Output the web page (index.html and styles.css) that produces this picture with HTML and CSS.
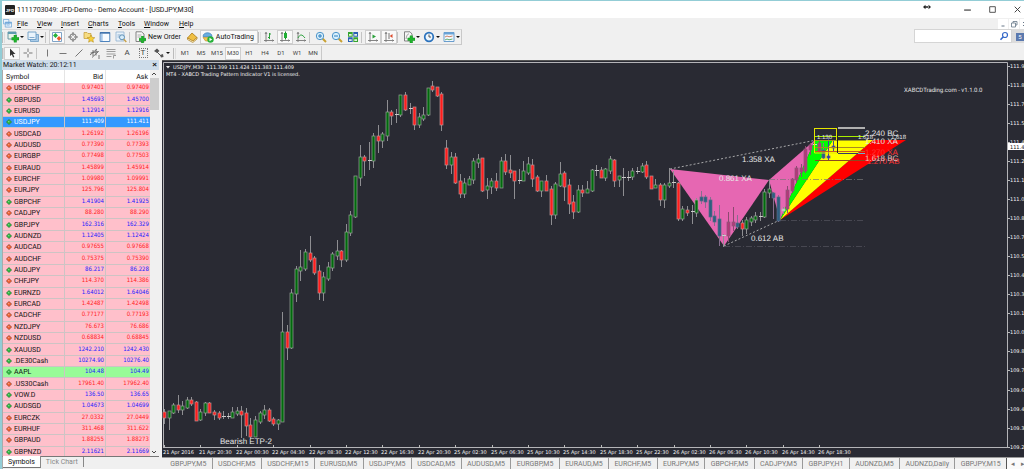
FILE: index.html
```html
<!DOCTYPE html>
<html lang="en">
<head>
<meta charset="utf-8">
<title>1111703049: JFD-Demo - Demo Account - [USDJPY,M30]</title>
<link rel="stylesheet" href="styles.css">
</head>
<body>
<svg class="defs" aria-hidden="true">
  <symbol id="diamond" viewBox="0 0 6 6"><path d="M3 0.3 5.8 3 3 5.7 0.2 3Z" stroke="#555" stroke-opacity=".7" stroke-width=".6"/><path d="M2 2h1.4v1.2H2z" fill="#fff" opacity=".4"/></symbol>
  <symbol id="axes" viewBox="0 0 10 10"><path d="M2 0v10M0 8.5h10M1 2l1-1.500 1 1.500M8.500 7.500l1 1-1 1" fill="none" stroke="#777" stroke-width=".9"/></symbol>
  <symbol id="plus" viewBox="0 0 6 6"><path d="M2 0h2v2h2v2H4v2H2V4H0V2h2z" fill="#1fb52c" stroke="#0d8a1a" stroke-width=".4"/></symbol>
</svg>
<div class="app">
  <header class="titlebar">
    <svg class="logo" viewBox="0 0 9 9"><rect width="9" height="9" rx="1" fill="#222"/><text x="4.500" y="6.200" text-anchor="middle" class="logo-text">JFD</text></svg>
    <h1 class="title">1111703049: JFD-Demo - Demo Account - [USDJPY,M30]</h1>
    <svg class="pin" viewBox="0 0 8 6"><path d="M0 3 2.500.8v4.400zM8 3 5.500.8v4.400zM2 2.200h4v1.600H2z" fill="#222"/></svg>
    <div class="window-buttons">
      <button aria-label="Minimize"><svg viewBox="0 0 8 8"><path d="M1 4.500h6" stroke="#333" fill="none"/></svg></button>
      <button aria-label="Maximize"><svg viewBox="0 0 8 8"><path d="M1.500 1.500h5v5h-5z" stroke="#444" fill="none" stroke-width=".8"/></svg></button>
      <button aria-label="Close"><svg viewBox="0 0 8 8"><path d="M1.500 1.500l5 5M6.500 1.500l-5 5" stroke="#333" fill="none" stroke-width=".8"/></svg></button>
    </div>
  </header>

  <nav class="menubar">
    <svg class="menu-icon" viewBox="0 0 10 10"><path d="M.5.5h6v5h-6zM2.500 3.500h7v5.500h-7z" fill="#e9f3fc" stroke="#6aa3d6" stroke-width=".8"/><path d="M2.500 3.500h7v1.500h-7z" fill="#6aa3d6"/><path d="M4 7.500l1.500-1 1 .5L8 6" stroke="#6aa3d6" fill="none" stroke-width=".7"/></svg>
    <button class="m-file"><u>F</u>ile</button>
    <button class="m-view"><u>V</u>iew</button>
    <button class="m-insert"><u>I</u>nsert</button>
    <button class="m-charts"><u>C</u>harts</button>
    <button class="m-tools"><u>T</u>ools</button>
    <button class="m-window"><u>W</u>indow</button>
    <button class="m-help"><u>H</u>elp</button>
    <div class="mdi-buttons">
      <button aria-label="Minimize chart"><svg viewBox="0 0 8 8"><path d="M2.500 6h3" stroke="#678" fill="none"/></svg></button>
      <button aria-label="Restore chart"><svg viewBox="0 0 8 8"><path d="M3 3V1.500h4V5H5.500M1.500 3h4v4h-4z" stroke="#678" fill="none" stroke-width=".8"/></svg></button>
      <button aria-label="Close chart"><svg viewBox="0 0 8 8"><path d="M2 2l4 4M6 2L2 6" stroke="#678" fill="none"/></svg></button>
    </div>
  </nav>

  <div class="bar-row">
    <div class="toolbar" role="toolbar" aria-label="Standard">
      <i class="grip"></i>
      <button class="tool drop" aria-label="New chart"><svg viewBox="0 0 12 12"><path d="M1 1h8v7H1z" fill="#eaf4ea" stroke="#5b8f9c" stroke-width=".9"/><path d="M1 1h8v2H1z" fill="#5e9bb0"/><use href="#plus" x="4.500" y="4" width="7.500" height="7.500"/></svg></button>
      <button class="tool drop" aria-label="Profiles"><svg viewBox="0 0 12 12"><path d="M3.500 3.500h8v7h-8z" fill="#a9cbe8" stroke="#6b9cc4" stroke-width=".8"/><path d="M1 1h8v7.500H1z" fill="#eaf4fc" stroke="#6b9cc4" stroke-width=".9"/><path d="M2.500 6.500h5" stroke="#85add0"/></svg></button>
      <i class="sep"></i>
      <button class="tool on" aria-label="Market Watch"><svg viewBox="0 0 12 12"><path d="M1.500 1.500h9v9h-9z" fill="#fff" stroke="#7fa3c7"/><path d="M4.500 2 7 4.500 4.500 7 2 4.500z" fill="#28b33c"/><path d="M8 5l2.300 2.500L8 10 5.700 7.500z" fill="#ee5a2c"/></svg></button>
      <button class="tool" aria-label="Data Window"><svg viewBox="0 0 12 12"><circle cx="6" cy="6" r="3.200" fill="none" stroke="#777"/><path d="M6 1v4M6 7v4M1 6h4M7 6h4" stroke="#777"/></svg></button>
      <button class="tool" aria-label="Navigator"><svg viewBox="0 0 12 12"><path d="M1 1.500h3l1 1h3v5H1z" fill="#f6dc82" stroke="#c29a35" stroke-width=".7"/><path d="M8 4l1.200 2.400 2.600.3-2 1.800.6 2.700L8 9.800l-2.400 1.400.6-2.700-2-1.800 2.600-.3z" fill="#f7d038" stroke="#b98f1c" stroke-width=".6"/></svg></button>
      <button class="tool" aria-label="Terminal"><svg viewBox="0 0 12 12"><path d="M1.200 1.500h9.600v9H1.200z" fill="#f7fbff" stroke="#4d83bd"/><path d="M1 1.300h10v1.400H1z" fill="#3a6ea8"/><path d="M1.700 3h2v7h-2z" fill="#a7c8ea"/></svg></button>
      <button class="tool" aria-label="Strategy Tester"><svg viewBox="0 0 12 12"><path d="M1 1h8v9H1z" fill="#e8f1f9" stroke="#8fb1d0" stroke-width=".8"/><path d="M2.500 4h3M2.500 6h2" stroke="#8fb1d0"/><circle cx="7" cy="6.300" r="2.500" fill="#d5ecfb" stroke="#5f8fb5"/><path d="M8.800 8.200l2.500 2.800" stroke="#c7a14a" stroke-width="1.500"/></svg></button>
      <i class="sep"></i>
      <button class="tool wide"><svg viewBox="0 0 12 12"><path d="M2 .8h5.500L10 3v7.500H2z" fill="#f7f7f7" stroke="#777" stroke-width=".9"/><path d="M3.500 4h4M3.500 6h3" stroke="#999" stroke-width=".8"/><use href="#plus" x="5" y="5" width="7" height="7"/></svg>New Order</button>
      <button class="tool" aria-label="MetaEditor"><svg viewBox="0 0 12 12"><path d="M1.500 7 6 2l5 4.500L7 10.500z" fill="#f0c044" stroke="#a97a16" stroke-width=".8"/><path d="M1.500 7v1.500L6.800 11.500l4.200-3.500V6.500L7 10z" fill="#fff4cf" stroke="#a97a16" stroke-width=".7"/></svg></button>
      <button class="tool wide on"><svg viewBox="0 0 12 12"><path d="M1 6.500h9L8.500 10h-5z" fill="#f0c751" stroke="#b08a27" stroke-width=".6"/><path d="M1 5.500C1 .5 10 .5 10 5.500Z" fill="#68aee0" stroke="#3c7fb8" stroke-width=".7"/><circle cx="8.500" cy="8.500" r="3.200" fill="#27b13a"/><path d="M7.500 6.800v3.400l2.800-1.700z" fill="#fff"/></svg>AutoTrading</button>
      <i class="grip"></i>
      <button class="tool" aria-label="Bar chart"><svg viewBox="0 0 12 12"><use href="#axes" x="1" y="1" width="10" height="10"/><path d="M6.500 2v6M5 6.500h1.500M6.500 3H8" stroke="#2ba13b" fill="none"/></svg></button>
      <button class="tool on" aria-label="Candlesticks"><svg viewBox="0 0 12 12"><use href="#axes" x="1" y="1" width="10" height="10"/><path d="M6.500.5v8" stroke="#168a28"/><path d="M5 2h3v5H5z" fill="#1fae33"/></svg></button>
      <button class="tool" aria-label="Line chart"><svg viewBox="0 0 12 12"><use href="#axes" x="1" y="1" width="10" height="10"/><path d="M3 7c2-4 4-4 7 0" stroke="#2ba13b" fill="none"/></svg></button>
      <i class="sep"></i>
      <button class="tool" aria-label="Zoom in"><svg viewBox="0 0 12 12"><path d="M7.500 7.500l3.500 3.500" stroke="#c9a132" stroke-width="2"/><circle cx="5" cy="5" r="3.700" fill="#d8effc" stroke="#4b93c9"/><path d="M3 5h4M5 3v4" stroke="#2d7fbe"/></svg></button>
      <button class="tool" aria-label="Zoom out"><svg viewBox="0 0 12 12"><path d="M7.500 7.500l3.500 3.500" stroke="#c9a132" stroke-width="2"/><circle cx="5" cy="5" r="3.700" fill="#d8effc" stroke="#4b93c9"/><path d="M3 5h4" stroke="#2d7fbe"/></svg></button>
      <button class="tool" aria-label="Tile windows"><svg viewBox="0 0 12 12"><path d="M1 1h4.700v4.700H1zM6.300 6.300H11V11H6.300z" fill="#35a52f"/><path d="M6.300 1H11v4.700H6.300zM1 6.300h4.700V11H1z" fill="#2a5fb4"/><path d="M2 3h2.700v1.700H2zM7.300 3H10v1.700H7.300zM2 8.300h2.700V10H2zM7.300 8.300H10V10H7.300z" fill="#e6f3e0"/></svg></button>
      <i class="sep"></i>
      <button class="tool on" aria-label="Auto scroll"><svg viewBox="0 0 12 12"><use href="#axes" x="1" y="1" width="10" height="10"/><path d="M5.500 3.500v4L9 5.500z" fill="#2ba13b"/></svg></button>
      <button class="tool on" aria-label="Chart shift"><svg viewBox="0 0 12 12"><use href="#axes" x="1" y="1" width="10" height="10"/><path d="M6 2v6" stroke="#777"/><path d="M9.500 3v4L6.700 5z" fill="#dd4a2c"/></svg></button>
      <i class="sep"></i>
      <button class="tool drop" aria-label="Indicators"><svg viewBox="0 0 12 12"><path d="M1.500.8h5.500L9 3v7H1.500z" fill="#f7f7f7" stroke="#777" stroke-width=".9"/><path d="M3 8c1-5 2-5 3-5" stroke="#888" fill="none" stroke-width=".8"/><use href="#plus" x="4.500" y="4.500" width="7.500" height="7.500"/></svg></button>
      <button class="tool drop" aria-label="Periods"><svg viewBox="0 0 12 12"><circle cx="6" cy="6" r="4.300" fill="#edf6fd" stroke="#2a72bd" stroke-width="1.700"/><path d="M6 3.500V6h2" stroke="#444" fill="none" stroke-width=".9"/></svg></button>
      <button class="tool drop" aria-label="Templates"><svg viewBox="0 0 12 12"><path d="M1 1.500h10v9H1z" fill="#f3f9ff" stroke="#5a93c8" stroke-width=".9"/><path d="M1 1.500h10v2H1z" fill="#69a3d6"/><path d="M2 6l2-1 2 .8L9.500 5" stroke="#c0603b" fill="none" stroke-width=".8"/><path d="M2 9l2-1 2 .8L9.500 8" stroke="#3b9b48" fill="none" stroke-width=".8"/></svg></button>
    </div>
    <label class="search"><input type="search" aria-label="Search"><svg viewBox="0 0 10 10"><circle cx="6" cy="4" r="2.500" fill="#fff" stroke="#3568c8" stroke-width="1.200"/><path d="M4.300 5.800 1.500 8.700" stroke="#3568c8" stroke-width="1.600"/></svg></label>
    <button class="chat" aria-label="5 messages"><span>5</span></button>
  </div>

  <div class="bar-row second">
    <div class="toolbar periods" role="toolbar" aria-label="Line studies and periods">
      <i class="grip"></i>
      <button class="tool on" aria-label="Cursor"><svg viewBox="0 0 12 12"><path d="M4 1.500v7.500l1.800-1.600 1.300 3 1.200-.5L7 7h2.500z" fill="#333"/></svg></button>
      <button class="tool" aria-label="Crosshair"><svg viewBox="0 0 12 12"><path d="M6 1.500v3.500M6 7v3.500M1.500 6H5M7 6h3.500" stroke="#777"/></svg></button>
      <i class="sep thin"></i>
      <button class="tool" aria-label="Vertical line"><svg viewBox="0 0 12 12"><path d="M6.500 2.500v7" stroke="#777"/></svg></button>
      <button class="tool" aria-label="Horizontal line"><svg viewBox="0 0 12 12"><path d="M2.500 6.500h7" stroke="#777"/></svg></button>
      <button class="tool" aria-label="Trendline"><svg viewBox="0 0 12 12"><path d="M2.500 9.500l7-7" stroke="#777"/></svg></button>
      <button class="tool" aria-label="Channel"><svg viewBox="0 0 12 12"><path d="M1 8l7-6M3 10.500l6.500-6M1.500 6l8-1.500M4 3v6M7 2.500v6M9 9h2M9 11h2" stroke="#666" stroke-width=".9"/></svg></button>
      <button class="tool" aria-label="Fibonacci"><svg viewBox="0 0 12 12"><path d="M1.500 2.500h9M1.500 4.500h9M1.500 7h9M1.500 9.500h5M8.500 8.500h2.500M8.500 8.500v3" stroke="#888" stroke-width=".8"/></svg></button>
      <button class="tool glyph">A</button>
      <button class="tool glyph"><span class="boxed">T</span></button>
      <button class="tool drop" aria-label="Arrows"><svg viewBox="0 0 12 12"><path d="M1 4l3-2.500L6.500 4 4 6zM7 8l3-1 .5 3L8 10.500z" fill="#555"/><path d="M4 5l4 4" stroke="#555"/></svg></button>
      <i class="grip far"></i>
      <button class="tool">M1</button><button class="tool">M5</button><button class="tool">M15</button><button class="tool on">M30</button><button class="tool">H1</button><button class="tool">H4</button><button class="tool">D1</button><button class="tool">W1</button><button class="tool">MN</button>
    </div>
  </div>

  <main class="workspace">
    <section class="watch">
      <header class="watch-title"><h2>Market Watch: 20:12:11</h2><button aria-label="Close Market Watch">×</button></header>
      <div class="watch-list">
        <table>
          <thead><tr><th>Symbol</th><th>Bid</th><th>Ask</th></tr></thead>
          <tbody id="quotes"></tbody>
        </table>
        <div class="scroll"><svg viewBox="0 0 8 6"><path d="M2 4l2-2 2 2" stroke="#444" fill="none"/></svg><i></i><svg viewBox="0 0 8 6"><path d="M2 2l2 2 2-2" stroke="#444" fill="none"/></svg></div>
      </div>
      <footer class="watch-tabs"><button class="current">Symbols</button><button>Tick Chart</button></footer>
    </section>

    <section class="charts">
      <div class="chart"><svg id="chart" viewBox="162 60 862 397" preserveAspectRatio="xMinYMin slice" role="img" aria-label="USDJPY M30 candlestick chart"></svg></div>
      <nav class="chart-tabs">
        <div class="tab-strip">
          <button>GBPJPY,M5</button><button>USDCHF,M5</button><button>USDCHF,M15</button><button>EURUSD,M5</button><button>USDJPY,M5</button><button>USDCAD,M5</button><button>AUDUSD,M5</button><button>EURGBP,M5</button><button>EURAUD,M5</button><button>EURCHF,M5</button><button>EURJPY,M5</button><button>GBPCHF,M5</button><button>CADJPY,M5</button><button>GBPJPY,H1</button><button>AUDNZD,M5</button><button>AUDNZD,Daily</button><button>GBPJPY,M15</button>
        </div>
        <div class="tab-scroll"><button aria-label="Scroll left">◂</button><button aria-label="Scroll right">▸</button></div>
      </nav>
    </section>
  </main>
</div>
<script src="app.js"></script>
</body>
</html>
```

FILE: styles.css
```css
* { box-sizing: border-box; }
body { margin: 0; font-family: Roboto, "Open Sans", sans-serif; font-size: 7px; line-height: 10px; color: #111; text-rendering: geometricPrecision; }
button { font: inherit; color: inherit; background: none; border: 0; padding: 0; margin: 0; }
h1, h2 { margin: 0; font: inherit; }
svg { display: block; }
.defs { position: absolute; width: 0; height: 0; }

.app { display: flex; flex-direction: column; height: 100vh; overflow: hidden; background: #f0f0f0; border-top: 1px solid #93cdd6; border-left: 2px solid #93cdd6; }

.titlebar { display: flex; align-items: center; flex: none; height: 17px; padding-left: 3px; background: #fff; }
.logo { width: 10px; height: 10px; margin-right: 2px; }
.logo-text { font: bold 4px "Liberation Sans", sans-serif; fill: #fff; }
.title { flex: 1; white-space: nowrap; }
.pin { width: 8px; height: 6px; margin: 0 32px 5px 0; }
.window-buttons { display: flex; gap: 16px; padding-right: 2px; }
.window-buttons svg { width: 9px; height: 9px; }

.menubar { display: flex; align-items: center; flex: none; height: 11px; padding-left: 1px; }
.menubar u { text-underline-offset: 1px; text-decoration-thickness: 1px; }
.menu-icon { width: 9px; height: 9px; margin-right: 5px; }
.menubar > button { text-align: left; }
.m-file { width: 20px; }
.m-view { width: 24px; }
.m-insert { width: 27px; }
.m-charts { width: 30px; }
.m-tools { width: 26px; }
.m-window { width: 35px; }
.mdi-buttons { display: flex; gap: 1px; margin: 0 -6px 0 auto; }
.mdi-buttons button { width: 10px; height: 10px; padding: 1px; background: #fff; }

.bar-row { display: flex; align-items: flex-start; flex: none; height: 17px; }
.bar-row.second { height: 14px; }
.toolbar { display: flex; align-items: center; height: 16px; border: 1px solid #c9c9c9; border-left: 0; border-top-color: #d8d8d8; }
.periods { height: 14px; border-top: 0; border-bottom: 0; font-size: 6px; color: #444; }
.grip { width: 3px; height: 11px; border-left: 1px solid #bbb; border-right: 1px solid #ddd; flex: none; }
.grip.far { margin: 0 1px 0 2px; }
.periods > .grip:first-child { width: 2px; }
.sep { width: 4px; height: 11px; border-left: 1px solid #c4c4c4; flex: none; }
.sep.thin { width: 3px; }
.tool { display: flex; align-items: center; justify-content: center; width: 16px; height: 14px; flex: none; }
.tool svg { width: 12px; height: 12px; flex: none; }
.periods .tool { height: 13px; }
.tool.on { background: #f9f9f9; border: 1px solid #cfcfcf; }
.tool.drop { width: 20px; justify-content: flex-start; padding-left: 2px; gap: 1px; }
.tool.drop::after { content: ""; border: 2px solid transparent; border-top-color: #111; border-bottom: 0; }
.tool.wide { width: auto; padding: 0 3px 0 1px; gap: 2px; color: #111; }
.tool.glyph { font-size: 8px; }
.boxed { border: 1px dotted #777; width: 9px; line-height: 8px; }

.search { display: flex; align-items: center; width: 98px; height: 14px; margin-left: auto; background: #fff; border: 1px solid #d5d5d5; }
.search input { flex: 1; min-width: 0; border: 0; padding: 0; background: none; }
.search svg { width: 10px; height: 10px; margin-right: 2px; }
.chat { width: 12px; height: 14px; background: #dcdcdc; padding: 2px 0 0 4px; }
.chat span { display: block; background: #5b79ae; color: #fff; font-size: 6px; line-height: 8px; }

.workspace { display: flex; flex: 1; min-height: 0; }
.watch { display: flex; flex-direction: column; width: 157px; flex: none; margin-right: 3px; }
.watch-title { display: flex; align-items: center; justify-content: space-between; flex: none; height: 10px; padding: 0 2px 0 1px; background: #cddcea; }
.watch-title button { font: bold 8px/8px "Liberation Sans", sans-serif; }
.watch-list { display: flex; flex: 1; min-height: 0; overflow: hidden; border-left: 1px solid #aaa; }
.watch table { display: flex; flex-direction: column; flex: 1; height: calc(100% + 2px); }
.watch thead { flex: none; height: 13px; background: #fff; }
.watch tbody { flex: 1; min-height: 0; display: grid; grid-auto-rows: 1fr; }
.watch tr { display: grid; grid-template-columns: 62px 41px 1fr; min-height: 0; }
.watch th { font-weight: normal; text-align: right; padding: 2px 2px 1px; border-right: 1px solid #e5e5e5; }
.watch th:first-child { text-align: left; padding-left: 3px; }
.watch td { display: flex; align-items: center; justify-content: flex-end; min-height: 0; padding: 0 1px; background: #ffc0cb; border-right: 1px solid #cdc4c4; border-bottom: 1px solid #cdc4c4; color: #f22; font-family: "DejaVu Sans Condensed", "Open Sans", sans-serif; font-size: 6px; }
.watch .up td { color: #22f; }
.watch tr td:first-child { justify-content: flex-start; gap: 2px; padding-left: 3px; color: #111; font-family: inherit; font-size: 7px; }
.watch td:last-child, .watch th:last-child { border-right: 0; }
.watch td svg { width: 6px; height: 6px; fill: #f0592a; }
.watch .up svg { fill: #27b53a; }
.watch .selected td, .watch .selected td:first-child { background: #3399ff; color: #fff; }
.watch .fresh td { background: #98fb98; }
.scroll { display: flex; flex-direction: column; width: 9px; flex: none; background: #f0f0f0; }
.scroll svg { width: 8px; height: 8px; }
.scroll i { height: 32px; margin-bottom: auto; background: #cdcdcd; }
.watch-tabs { display: flex; flex: none; height: 13px; border-top: 1px solid #777; border-left: 1px solid #aaa; }
.watch-tabs button { height: 10px; padding: 0 5px; color: #888; border-right: 1px solid #888; }
.watch-tabs .current { margin-top: -1px; height: 12px; background: #fff; color: #111; border-bottom: 1px solid #777; }

.charts { display: flex; flex-direction: column; flex: 1; min-width: 0; }
.chart { flex: 1; min-height: 0; overflow: hidden; background: #292a33; border-bottom: 1px solid #9a9a9a; }
.chart svg { width: 100%; height: 100%; }
.chart-tabs { display: flex; flex: none; height: 11px; background: #f0f0f0; color: #777; }
.tab-strip { display: flex; flex: 1; min-width: 0; padding-left: 3px; border-right: 1px solid #555; }
.tab-strip button { flex: 1 1 auto; border-right: 1px solid #999; white-space: nowrap; }
.tab-strip button:last-child { border-right: 0; }
.tab-scroll { display: flex; gap: 6px; width: 17px; padding-left: 4px; background: #fafafa; overflow: hidden; flex: none; }

.axis-text { font-family: "DejaVu Sans", "Open Sans", sans-serif; font-size: 5px; fill: #f4f4f4; }
.axis-text.current { fill: #111; }
.note { font-family: "Liberation Sans", sans-serif; font-size: 8px; fill: #e6e6e6; }
.note.tiny { font-size: 6px; }
.note.alert { fill: #f33; }
.note.soft { fill: #eec0c0; }
.note.brand { font-family: Roboto, sans-serif; font-size: 6px; }
.frame { fill: none; stroke: #b4b4b8; }
.frame.outer { stroke: #555; }
```

FILE: app.js
```javascript
const quotes = `USDCHF 0.97401 0.97409 d
GBPUSD 1.45693 1.45700 u
EURUSD 1.12914 1.12916 u
USDJPY 111.409 111.411 u selected
USDCAD 1.26192 1.26196 d
AUDUSD 0.77390 0.77393 d
EURGBP 0.77498 0.77503 d
EURAUD 1.45899 1.45914 d
EURCHF 1.09980 1.09991 d
EURJPY 125.796 125.804 d
GBPCHF 1.41904 1.41925 u
CADJPY 88.280 88.290 d
GBPJPY 162.316 162.329 u
AUDNZD 1.12405 1.12424 u
AUDCAD 0.97655 0.97668 d
AUDCHF 0.75375 0.75390 d
AUDJPY 86.217 86.228 u
CHFJPY 114.370 114.386 d
EURNZD 1.64012 1.64046 u
EURCAD 1.42487 1.42498 d
CADCHF 0.77177 0.77193 d
NZDJPY 76.673 76.686 d
NZDUSD 0.68834 0.68845 d
XAUUSD 1242.210 1242.430 u
.DE30Cash 10274.90 10276.40 u
AAPL 104.48 104.49 u fresh
.US30Cash 17961.40 17962.40 d
VOW.D 136.50 136.65 u
AUDSGD 1.04673 1.04699 u
EURCZK 27.0332 27.0449 d
EURHUF 311.468 311.622 d
GBPAUD 1.88255 1.88273 d
GBPNZD 2.11621 2.11669 u`.split("\n").map(line => line.split(" "));

document.getElementById("quotes").innerHTML = quotes.map(([name, bid, ask, dir, state = ""]) =>
  `<tr class="${dir === "u" ? "up" : "down"} ${state}"><td><svg><use href="#diamond"/></svg>${name}</td><td>${bid}</td><td>${ask}</td></tr>`).join("");

// Each candle: colour, high, body top, body bottom, low.
// g rising, r falling, w flat; m and t are rising and falling inside a filled pattern, b is blue.
const candles = `r409,412,417,423 g411,411,417,429 g403,405,412,413 r395,405,409,412 g401,406,409,414 g397,400,407,408 r397,400,403,405 r401,402,420,420 g409,412,419,420 g402,403,412,415 r402,403,412,412 r410,412,414,419 r411,413,417,419 w411,416,416,418 w413,416,416,418 g407,412,417,417 g407,411,413,415 r406,411,414,437 r408,413,425,435 r418,425,436,438 g416,420,436,436 g411,413,421,423 g405,410,414,418 r408,410,420,421 r417,419,423,425 g419,420,423,429 g312,332,421,421 r325,332,347,359 g289,293,347,348 g266,269,293,301
g250,267,270,280 g249,252,268,270 r236,253,259,261 r256,258,272,274 r265,271,292,299 g272,277,292,300 g262,267,278,280 g252,254,267,270 g240,251,255,259 r250,251,259,266 g224,232,259,261 g211,215,232,235 g176,176,216,217 g145,157,177,185 r155,157,160,175 w142,160,160,169 g133,136,160,167 r125,136,140,152 g132,134,140,147 g100,112,135,140 r110,112,115,124 w109,114,114,122 g95,95,114,116 r92,95,109,110 w103,108,108,113 r107,107,124,129 g113,117,124,127 g107,115,118,120 g88,88,114,115 r81,86,89,91
r87,87,95,96 r92,94,124,130 r140,148,164,168 g152,157,164,173 r153,157,182,183 r174,181,193,197 g178,183,193,197 g176,179,184,184 g158,161,179,183 g154,159,162,167 r158,158,190,191 g178,186,189,198 g178,181,186,193 r173,181,187,190 g157,161,187,187 r154,161,171,174 r155,170,172,177 r171,171,180,198 w169,180,180,183 g161,171,180,180 g157,164,172,174 r159,165,178,186 r175,177,190,191 g181,181,190,196 r175,181,190,190 r186,189,214,224 g182,184,214,218 g162,174,185,186 r171,173,186,200 r179,185,203,213
r195,202,211,218 g185,190,211,212 r185,190,192,196 g181,189,192,192 g169,170,190,191 w165,170,170,175 r167,170,177,177 g168,169,177,180 g156,159,170,173 r159,160,180,186 g176,176,179,186 w168,177,177,195 w171,177,177,180 g168,171,176,179 w167,171,171,173 g163,166,171,172 r161,165,176,178 r176,176,188,188 g179,185,187,187 r183,185,199,205 g183,185,199,207 g168,183,185,187 w171,182,182,187 r182,183,218,220 g206,209,218,220 r206,210,212,215 w205,211,211,223 g198,200,212,216 t191,197,200,203 t195,197,201,207
t197,200,216,220 t211,216,221,225 t205,219,235,245 w234,235,235,246 m212,222,235,241 m207,222,225,230 t215,223,226,228 r220,223,228,235 g217,220,228,233 g216,218,221,225 g212,216,219,222 w212,216,216,220 g189,192,216,217 g180,189,192,197 t192,193,197,218 t195,197,220,221 w207,209,210,213 m186,190,208,212 m178,179,190,192 m166,168,179,182 m164,168,171,176 m146,149,170,172 m143,145,149,154 w139,144,144,152 m140,143,150,152 t143,150,157,158 b138,156,157,160 b141,146,147,150`
  .split(/\s+/).map(s => [s[0], ...s.slice(1).split(",").map(Number)]);

const fills = { g: "#006a0c", r: "#ff1c1c", w: "#ccc", m: "#b3387a", t: "#2d5f80", b: "#34348c" };
const edges = { g: "#98a298", r: "#b99696", w: "#bbb", m: "#8c5a78", t: "#5a6a86", b: "#555bb0" };
const wicks = { g: "#8e8e92", r: "#8e8e92", w: "#8e8e92", m: "#8b4a70", t: "#876f90", b: "#44449c" };

function candle([kind, high, top, bottom, low], i) {
  const x = Math.round(164 + i * 4.548);
  const wick = `<path d="M${x + 0.5} ${high}V${low + 1}" stroke="${wicks[kind]}"/>`;
  if (top === bottom) return wick + `<path d="M${x - 1} ${top + 0.5}h4" stroke="${fills[kind]}"/>`;
  return wick + `<rect x="${x - 1}" y="${top}" width="3" height="${bottom - top + 1}" fill="${fills[kind]}" stroke="${edges[kind]}" stroke-width=".7"/>`;
}
const text = (x, y, value, cls = "note") => `<text x="${x}" y="${y}" class="${cls}">${value}</text>`;
const poly = (points, fill) => `<polygon points="${points}" fill="${fill}"/>`;
const line = (d, stroke, extra = "") => `<path d="${d}" stroke="${stroke}" fill="none" ${extra}/>`;

const prices = ["111.9", "111.8", "111.7", "111.5", "111.4", "111.2", "111.1", "111.0", "110.8", "110.7", "110.5", "110.4", "110.3", "110.1", "110.0", "109.8", "109.7", "109.6", "109.4", "109.3", "109.2"];
const times = ["21 Apr 2016", "21 Apr 20:30", "22 Apr 00:30", "22 Apr 04:30", "22 Apr 08:30", "22 Apr 12:30", "22 Apr 16:30", "22 Apr 20:30", "25 Apr 02:30", "25 Apr 06:30", "25 Apr 10:30", "25 Apr 14:30", "25 Apr 18:30", "25 Apr 22:30", "26 Apr 02:30", "26 Apr 06:30", "26 Apr 10:30", "26 Apr 14:30", "26 Apr 18:30"];

const dashed = 'stroke-dasharray="2 2" stroke-width=".8"';
const dashDot = 'stroke-dasharray="6 2 1 2" stroke-width=".7"';

document.getElementById("chart").innerHTML = [
  `<rect x="162" y="60" width="862" height="397" fill="#292a33"/>`,
  `<path d="M162 60.500H1024" class="frame outer"/>`,
  `<path d="M163.500 448V62.500H1007.500V448" class="frame"/><path d="M163 447.500h845" class="frame"/>`,
  ...prices.map((p, i) => line(`M1008 ${66.5 + Math.round(i * 19.03)}h2`, "#bbb") + text(1010, 68 + Math.round(i * 19.03), p, "axis-text")),
  ...times.map((t, i) => line(`M${Math.round(164 + i * 36.4) + 0.5} 445v3`, "#bbb") + text(Math.round(163 + i * 36.4), 454, t, "axis-text")),
  `<rect x="1008" y="143" width="16" height="7" fill="#fff"/>`,
  text(1010, 149, "111.4", "axis-text current"),
  poly("670,169 769,180 724,246", "#e667b2"),
  poly("769,180 815,140 780,220", "#e667b2"),
  poly("780,220 873,140 906,140", "#ff0000"),
  poly("780,220 833,140 873,140", "#ffff00"),
  poly("780,220 815,140 833,140", "#00ff00"),
  line("M670 169 814 140.500M724 246 780 220", "#c8c8c8", dashed),
  line("M769 179.500H864", "#777", dashDot),
  line("M780 220.500H865M724 246.500H865", "#55555e", dashDot),
  ...candles.map(candle),
  line("M838 128H865", "#b0b0b0", 'stroke-width="2"'),
  line("M815 136.500H865", "#a8ee00", 'stroke-width="1"'),
  line("M815 140.500H866", "#9c9a20"),
  line("M815 147.500H865", "#a88a20"),
  line("M815 151.500H865", "#c85a20"),
  line("M838 153.500H858", "#333a66"), line("M858 153.500H865", "#6ab0d0"),
  line("M815 160.500H865", "#8c4a20"),
  line("M837.500 129V153", "#222"),
  line("M815 128.500H837M814.500 128V153H837", "#e6e600"),
  line("M836.500 128V140", "#e6e600"),
  text(867, 164, "1.270 AB", "note alert"),
  text(865, 155, "1.270 XA", "note alert"),
  text(865, 161, "1.618 BC", "note soft"),
  text(865, 136, "2.240 BC"),
  text(865, 144, "1.410 XA"),
  text(817, 139, "1.130", "note tiny"),
  text(858, 139, "1.618", "note tiny"),
  text(891, 139, "1.618", "note tiny"),
  text(742, 162, "1.358 XA"),
  text(719, 181, "0.861 XA"),
  text(751, 241, "0.612 AB"),
  text(220, 444, "Bearish ETP-2"),
  text(904, 92, "XABCDTrading.com - v1.1.0.0", "note brand"),
  `<path d="M166 66h4l-2 2.500z" fill="#eee"/>`,
  text(173, 69, "USDJPY,M30&nbsp; 111.399 111.424 111.383 111.409", "axis-text"),
  text(166, 76, "MT4 - XABCD Trading Pattern Indicator V1 is licensed.", "axis-text")
].join("");
```
